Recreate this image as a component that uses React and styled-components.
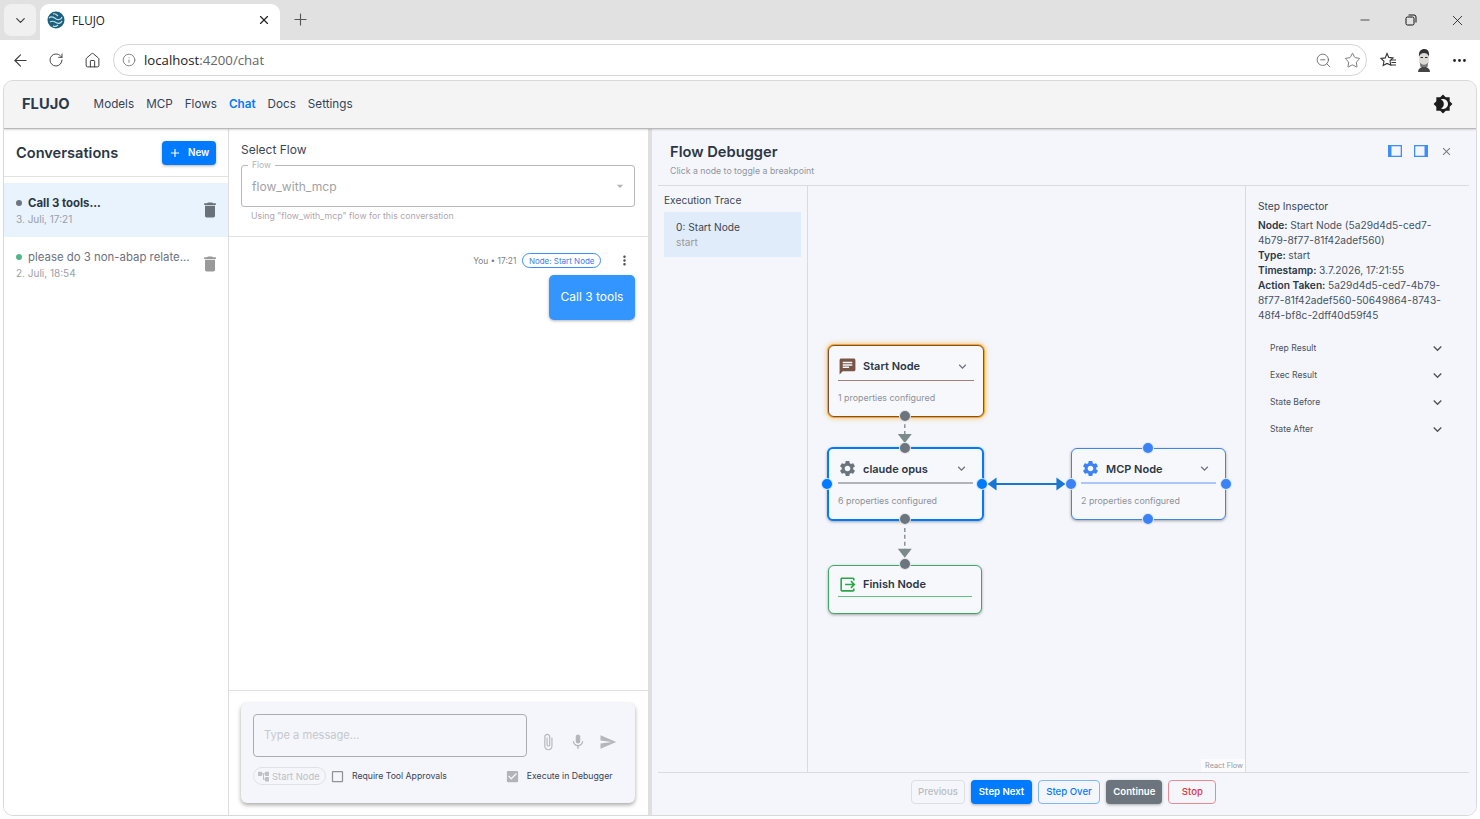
import React from 'react'
import styled, { createGlobalStyle } from 'styled-components'
import { ArrowLeft, RotateCw, Home, Info, ZoomOut, Star, MoreHorizontal, Plus, X, Minus, ChevronDown } from 'lucide-react'
import {
  MdAdd, MdDelete, MdBrightness4, MdAttachFile, MdMic, MdSend, MdAccountTree, MdExpandMore,
  MdClose, MdMoreVert, MdCheckBoxOutlineBlank, MdCheckBox, MdChat, MdSettings, MdOutput, MdArrowDropDown,
} from 'react-icons/md'

const GlobalStyle = createGlobalStyle`
  html, body { margin: 0; padding: 0; height: 100%; overflow: hidden; background: #fff; }
  body { font-family: Inter, "Liberation Sans", sans-serif; color: #2b3645; }
  * { box-sizing: border-box; }
`

const Page = styled.div`
  width: 1480px;
  height: 819px;
  display: flex;
  flex-direction: column;
`

/* browser chrome */
const TabStrip = styled.div`
  height: 40px;
  background: #e1e1e1;
  display: flex;
  align-items: flex-end;
  padding-left: 4px;
`
const TabMenu = styled.div`
  width: 32px;
  height: 32px;
  margin-bottom: 4px;
  border-radius: 7px;
  background: #f0f0f0;
  display: flex;
  align-items: center;
  justify-content: center;
  color: #444;
`
const Tab = styled.div`
  width: 240px;
  height: 36px;
  margin-left: 4px;
  background: #fff;
  border-radius: 9px 9px 0 0;
  display: flex;
  align-items: center;
  padding: 0 9px 4px 7px;
  font-family: "Open Sans", sans-serif;
  font-size: 11.7px;
  color: #222;
`
const TabTitle = styled.span`
  flex: 1;
  margin-left: 7px;
`
const NewTab = styled.div`
  margin: 0 0 7px 11px;
  height: 28px;
  display: flex;
  align-items: center;
  color: #555;
`
const WindowButtons = styled.div`
  margin-left: auto;
  height: 40px;
  display: flex;
  align-items: center;
  color: #111;
`
const WindowButton = styled.div`
  width: 46px;
  display: flex;
  justify-content: center;
`
const RestoreIcon = styled.svg`
  width: 12px;
  height: 12px;
  fill: none;
  stroke: #111;
`
const BrowserBar = styled.div`
  height: 40px;
  background: #fff;
  display: flex;
  align-items: center;
  padding-left: 2px;
  color: #3c3c3c;
`
const BarIcon = styled.div`
  width: 36px;
  display: flex;
  justify-content: center;
`
const Omnibox = styled.div`
  width: 1254px;
  height: 32px;
  margin-left: 3px;
  border: 1px solid #d6d6d6;
  border-radius: 16px;
  display: flex;
  align-items: center;
  padding: 0 5px 0 8px;
  font-family: "Open Sans", sans-serif;
  font-size: 13.2px;
  color: #666;
`
const Host = styled.span`
  color: #222;
`
const UrlText = styled.div`
  flex: 1;
  margin-left: 8px;
`
const OmniIcon = styled.div`
  margin-left: 12px;
  display: flex;
  color: #555;
`
const RightIcons = styled.div`
  display: flex;
  align-items: center;
  margin-left: 12px;
  gap: 18px;
`

/* app */
const AppFrame = styled.div`
  flex: 1;
  margin: 0 3px 3px;
  border: 1px solid #d9d9d9;
  border-radius: 10px;
  overflow: hidden;
  display: flex;
  flex-direction: column;
  min-height: 0;
`
const TopBar = styled.div`
  height: 48px;
  background: #f4f4f4;
  border-bottom: 1px solid #b9b9b9;
  border-radius: 10px 10px 0 0;
  box-shadow: 0 1px 2px rgba(0,0,0,.15);
  display: flex;
  align-items: center;
  padding: 0 23px 1px 18px;
  flex: none;
  position: relative;
  z-index: 2;
`
const Brand = styled.div`
  font-size: 14.7px;
  font-weight: 700;
  color: #2b3a4d;
  margin-right: 24px;
`
const NavLink = styled.div`
  font-size: 11.7px;
  margin-right: 12px;
  font-weight: ${p => p.$active ? 600 : 400};
  color: ${p => p.$active ? '#007bff' : '#33445a'};
`
const ThemeIcon = styled.div`
  margin-left: auto;
  display: flex;
  color: #1c1c1c;
`
const Main = styled.div`
  flex: 1;
  display: flex;
  min-height: 0;
`
const Sidebar = styled.div`
  width: 225px;
  flex: none;
  border-right: 1px solid #dcdcdc;
  background: #fff;
`
const SideHead = styled.div`
  height: 48px;
  display: flex;
  align-items: center;
  justify-content: space-between;
  padding: 0 12px;
  border-bottom: 1px solid #e2e2e2;
`
const SideTitle = styled.div`
  font-size: 14.6px;
  font-weight: 600;
  color: #2b3645;
`
const NewButton = styled.div`
  width: 54px;
  height: 24px;
  background: #007bff;
  border-radius: 4px;
  color: #fff;
  font-size: 9.8px;
  font-weight: 600;
  display: flex;
  align-items: center;
  gap: 6px;
  padding-left: 6px;
  box-shadow: 0 1px 3px rgba(0,0,0,.3);
`
const ConvList = styled.div`
  padding-top: 6px;
`
const ConvItem = styled.div`
  height: 54px;
  background: ${p => p.$active ? '#e8f3fd' : 'transparent'};
  display: flex;
  align-items: center;
  padding: 0 12px;
`
const ConvText = styled.div`
  flex: 1;
  min-width: 0;
`
const ConvTitle = styled.div`
  display: flex;
  align-items: center;
  gap: 6px;
  font-size: 11.4px;
  font-weight: ${p => p.$active ? 700 : 400};
  color: ${p => p.$active ? '#2b3645' : '#6b7280'};
`
const Dot = styled.span`
  width: 6px;
  height: 6px;
  border-radius: 50%;
  background: ${p => p.$color};
`
const ConvDate = styled.div`
  margin-top: 3px;
  font-size: 10px;
  color: #9a9fa6;
`
const Trash = styled.div`
  display: flex;
  color: ${p => p.$active ? '#6b7178' : '#9a9a9a'};
  margin-right: -4px;
`

const Chat = styled.div`
  width: 419px;
  flex: none;
  display: flex;
  flex-direction: column;
  background: #fff;
`
const FlowBox = styled.div`
  height: 108px;
  padding: 13px 13px 0 12px;
  border-bottom: 1px solid #e2e2e2;
`
const FlowLabel = styled.div`
  font-size: 12px;
  color: #3b4654;
`
const FlowSelect = styled.div`
  position: relative;
  height: 42px;
  margin-top: 8px;
  border: 1px solid #b7b7b7;
  border-radius: 3px;
  display: flex;
  align-items: center;
  justify-content: space-between;
  padding: 0 6px 0 10px;
  font-size: 12.1px;
  color: #a2a2a2;
`
const FloatingLabel = styled.span`
  position: absolute;
  left: 6px;
  top: -6px;
  padding: 0 4px;
  background: #fff;
  font-size: 8.5px;
  color: #b5b5b5;
`
const HelperText = styled.div`
  margin: 4px 0 0 10px;
  font-size: 8.75px;
  color: #b0a6ac;
`
const Messages = styled.div`
  flex: 1;
  padding: 16px 13px 0;
  display: flex;
  flex-direction: column;
  align-items: flex-end;
`
const MetaRow = styled.div`
  display: flex;
  align-items: center;
  font-size: 8.4px;
  color: #808080;
`
const NodeChip = styled.span`
  height: 15px;
  margin-left: 6px;
  padding: 0 5.5px;
  border: 1px solid #3d8ef5;
  border-radius: 8px;
  display: flex;
  align-items: center;
  font-size: 8px;
  color: #3d7cf0;
`
const MoreBtn = styled.div`
  display: flex;
  margin-left: 16px;
  margin-right: 3px;
  color: #555;
`
const Bubble = styled.div`
  width: 86px;
  height: 45px;
  margin-top: 7px;
  padding-bottom: 3px;
  background: #3395ff;
  border-radius: 5px;
  color: #fff;
  font-size: 12px;
  display: flex;
  align-items: center;
  justify-content: center;
  box-shadow: 0 1px 3px rgba(0,0,0,.3);
`
const Composer = styled.div`
  height: 125px;
  padding: 12px 13px 0 12px;
  border-top: 1px solid #e2e2e2;
`
const ComposerCard = styled.div`
  height: 100px;
  background: #f4f6fb;
  border-radius: 6px;
  padding: 11px 12px 0;
  box-shadow: 0 2px 4px rgba(0,0,0,.35);
`
const InputRow = styled.div`
  display: flex;
`
const MessageInput = styled.div`
  width: 274px;
  height: 43px;
  border: 1px solid #a9adb3;
  border-radius: 4px;
  padding: 13px 10px;
  font-size: 11.1px;
  color: #c6c8cc;
`
const InputIcons = styled.div`
  display: flex;
  align-items: center;
  margin: 13px 0 0 12px;
  gap: 12px;
  color: #b4b6ba;
`
const OptionRow = styled.div`
  display: flex;
  align-items: center;
  margin-top: 10px;
  font-size: 8.7px;
  color: #384455;
`
const StartChip = styled.div`
  width: 73px;
  height: 18px;
  border: 1px solid #e0e1e5;
  border-radius: 9px;
  display: flex;
  align-items: center;
  padding-left: 3px;
  gap: 2px;
  font-size: 9.4px;
  color: #bcbfc4;
`
const Check = styled.div`
  display: flex;
  margin-left: ${p => p.$gap}px;
  margin-right: 7px;
  color: ${p => p.$on ? '#b1b3b6' : '#8f9296'};
`

const Splitter = styled.div`
  width: 4px;
  flex: none;
  background: #dfdfdf;
`

const Debugger = styled.div`
  flex: 1;
  min-width: 0;
  background: #f4f6fb;
  padding: 0 7px 0 6px;
  display: flex;
  flex-direction: column;
`
const DebugHead = styled.div`
  height: 57px;
  flex: none;
  border-bottom: 1px solid #d9dbdf;
  padding: 14px 0 0 12px;
  display: flex;
  justify-content: space-between;
`
const DebugTitle = styled.div`
  font-size: 14.7px;
  font-weight: 600;
  color: #2b3645;
`
const DebugSub = styled.div`
  margin-top: 5px;
  font-size: 8.75px;
  color: #8f959d;
`
const HeadIcons = styled.div`
  display: flex;
  gap: 12px;
  padding-right: 16px;
  height: 16px;
  align-items: center;
  color: #7a7f86;
`
const DockIcon = styled.svg`
  width: 14px;
  height: 12px;
  fill: none;
  stroke: #3d8ef5;
  stroke-width: 1.3;
`
const DebugBody = styled.div`
  flex: 1;
  display: flex;
  min-height: 0;
`
const Trace = styled.div`
  width: 150px;
  flex: none;
  border-right: 1px solid #d9dbdf;
  padding: 8px 6px 0;
`
const SmallHead = styled.div`
  font-size: 10.2px;
  color: #3b4654;
`
const TraceItem = styled.div`
  height: 45px;
  margin-top: 6px;
  background: #e1ecfa;
  padding: 9px 12px;
  font-size: 10.2px;
  color: #3b4654;
`
const TraceSub = styled.div`
  margin-top: 3px;
  color: #999;
`
const Canvas = styled.div`
  position: relative;
  width: 438px;
  flex: none;
  border-right: 1px solid #d9dbdf;
`
const EdgeLayer = styled.svg`
  position: absolute;
  inset: 0;
  width: 100%;
  height: 100%;
`
const Attribution = styled.div`
  position: absolute;
  right: 0;
  bottom: 0;
  padding: 2px 2px 2px 4px;
  background: rgba(255,255,255,.6);
  font-size: 7.3px;
  color: #999;
`
const NodeBox = styled.div`
  position: absolute;
  left: ${p => p.$x}px;
  top: ${p => p.$y}px;
  width: ${p => p.$w}px;
  height: ${p => p.$h}px;
  border: ${p => p.$bw}px solid ${p => p.$color};
  border-radius: 6px;
  background: #f7f8fc;
  box-shadow: ${p => p.$glow ? '0 0 5px 1px rgba(255,170,30,.75), 0 0 0 1px #f5a623' : '0 1px 3px rgba(0,0,0,.35)'};
  padding: 0 9px;
`
const NodeHead = styled.div`
  height: ${p => p.$h}px;
  padding-top: 6px;
  display: flex;
  align-items: center;
  gap: 6px;
  border-bottom: ${p => p.$lw}px solid ${p => p.$line};
  font-size: 11px;
  font-weight: 600;
  color: #2b3645;
`
const NodeName = styled.span`
  flex: 1;
`
const NodeIcon = styled.div`
  display: flex;
  color: ${p => p.$color};
`
const NodeChevron = styled.div`
  display: flex;
  color: #6b7280;
  margin-right: 4px;
`
const NodeMeta = styled.div`
  margin-top: 11px;
  font-size: 8.9px;
  color: #8d9299;
`
const Handle = styled.span`
  position: absolute;
  left: ${p => p.$x}px;
  top: ${p => p.$y}px;
  width: 12px;
  height: 12px;
  border-radius: 50%;
  background: ${p => p.$color};
  border: 1px solid rgba(255,255,255,.8);
`
const Inspector = styled.div`
  flex: 1;
  padding: 14px 0 0 12px;
  min-width: 0;
`
const InspectorText = styled.div`
  margin-top: 6px;
  font-size: 10.2px;
  line-height: 15px;
  color: #47525f;
  b { font-weight: 600; color: #2b3645; }
`
const Accordion = styled.div`
  margin-top: 11px;
  padding-left: 12px;
`
const AccRow = styled.div`
  height: 27px;
  display: flex;
  align-items: center;
  justify-content: space-between;
  padding-right: 26px;
  font-size: 8.6px;
  color: #47525f;
`
const AccChevron = styled.div`
  display: flex;
  color: #555;
  padding-top: 2px;
  margin-right: -3px;
`
const DebugFoot = styled.div`
  height: 43px;
  flex: none;
  border-top: 1px solid #d9dbdf;
  padding-bottom: 5px;
  display: flex;
  align-items: center;
  justify-content: center;
  gap: 6px;
`
const DebugButton = styled.div`
  height: 24px;
  padding: 0 ${p => p.$pad || 7}px;
  border-radius: 4px;
  display: flex;
  align-items: center;
  font-size: 9.6px;
  font-weight: ${p => p.$raised ? 600 : 500};
  background: ${p => p.$bg || 'transparent'};
  color: ${p => p.$color};
  border: 1px solid ${p => p.$border || 'transparent'};
  box-shadow: ${p => p.$raised ? '0 1px 3px rgba(0,0,0,.3)' : 'none'};
`

const FaviconSvg = () => (
  <svg width="18" height="18" viewBox="0 0 18 18">
    <circle cx="9" cy="9" r="8.5" fill="#1d5f7c" />
    <path d="M2 7c3-3 5 0 7 1s5 1 6-2M3 11c3-2 5 0 7 1s4 0 5-2M6 3c2-1 4 1 5 2M6 15c2 1 4 0 5-1" stroke="#bfe3ea" strokeWidth="1.2" fill="none" />
  </svg>
)

const AvatarSvg = () => (
  <svg width="18" height="24" viewBox="0 0 18 24">
    <path d="M3 24c0-3 2-4 4-5h4c2 1 4 2 4 5z" fill="#444" />
    <ellipse cx="9" cy="10.500" rx="5" ry="7.500" fill="#dedbd7" />
    <path d="M4 8.500C3.500 3 6 1 9.500 1S14.500 4 14 8.500C13 6 11 5 9 5S5 6 4 8.500z" fill="#333" />
    <path d="M4.500 13c1 5 8 5 9 0l-1 6H5.500z" fill="#777" />
    <rect x="5.500" y="9" width="2.500" height="1" fill="#333" />
    <rect x="10" y="9" width="2.500" height="1" fill="#333" />
  </svg>
)

const FavoritesSvg = () => (
  <svg width="18" height="18" viewBox="0 0 18 18" fill="none" stroke="#333" strokeWidth="1.1">
    <path d="M8 2.500l1.800 3.900 4.200.5-3 2.900.8 4.200L8 12.400l-3.800 2.100.8-4.200-3-2.900 4.200-.5z" />
    <path d="M12 9h5M12.500 11.500h4.500M12 14h5" />
  </svg>
)

const GRAY = '#6c757d'
const BLUE = '#007bff'
const MCP_BLUE = '#3b82f6'

const inspectorLines = [
  ['Node:', 'Start Node (5a29d4d5-ced7-'],
  [null, '4b79-8f77-81f42adef560)'],
  ['Type:', 'start'],
  ['Timestamp:', '3.7.2026, 17:21:55'],
  ['Action Taken:', '5a29d4d5-ced7-4b79-'],
  [null, '8f77-81f42adef560-50649864-8743-'],
  [null, '48f4-bf8c-2dff40d59f45'],
]

const FlowNode = ({ x, y, w, h, bw, color, line, lw = 1, headH, icon, iconColor, name, meta, glow, chevron = true }) => (
  <NodeBox $x={x} $y={y} $w={w} $h={h} $bw={bw} $color={color} $glow={glow}>
    <NodeHead $h={headH} $line={line} $lw={lw}>
      <NodeIcon $color={iconColor}>{icon}</NodeIcon>
      <NodeName>{name}</NodeName>
      {chevron && <NodeChevron><MdExpandMore size={15} /></NodeChevron>}
    </NodeHead>
    {meta && <NodeMeta>{meta}</NodeMeta>}
  </NodeBox>
)

export default function App() {
  return (
    <Page>
      <GlobalStyle />
      <TabStrip>
        <TabMenu><ChevronDown size={15} /></TabMenu>
        <Tab>
          <FaviconSvg />
          <TabTitle>FLUJO</TabTitle>
          <X size={14} />
        </Tab>
        <NewTab><Plus size={19} strokeWidth={1.4} /></NewTab>
        <WindowButtons>
          <WindowButton><Minus size={14} strokeWidth={1.2} /></WindowButton>
          <WindowButton>
            <RestoreIcon viewBox="0 0 12 12">
              <rect x="1" y="3" width="8" height="8" rx="1.500" />
              <path d="M3.500 1h5.500a2 2 0 0 1 2 2v5.500" />
            </RestoreIcon>
          </WindowButton>
          <WindowButton><X size={17} strokeWidth={1.1} /></WindowButton>
        </WindowButtons>
      </TabStrip>
      <BrowserBar>
        <BarIcon><ArrowLeft size={19} strokeWidth={1.4} /></BarIcon>
        <BarIcon><RotateCw size={16} strokeWidth={1.4} /></BarIcon>
        <BarIcon><Home size={17} strokeWidth={1.4} /></BarIcon>
        <Omnibox>
          <Info size={14} strokeWidth={1.3} />
          <UrlText><Host>localhost</Host>:4200/chat</UrlText>
          <OmniIcon><ZoomOut size={17} strokeWidth={1.1} /></OmniIcon>
          <OmniIcon><Star size={17} strokeWidth={1.1} /></OmniIcon>
        </Omnibox>
        <RightIcons>
          <FavoritesSvg />
          <AvatarSvg />
          <MoreHorizontal size={17} color="#222" />
        </RightIcons>
      </BrowserBar>

      <AppFrame>
        <TopBar>
          <Brand>FLUJO</Brand>
          <NavLink>Models</NavLink>
          <NavLink>MCP</NavLink>
          <NavLink>Flows</NavLink>
          <NavLink $active>Chat</NavLink>
          <NavLink>Docs</NavLink>
          <NavLink>Settings</NavLink>
          <ThemeIcon><MdBrightness4 size={20} /></ThemeIcon>
        </TopBar>
        <Main>
          <Sidebar>
            <SideHead>
              <SideTitle>Conversations</SideTitle>
              <NewButton><MdAdd size={14} />New</NewButton>
            </SideHead>
            <ConvList>
              <ConvItem $active>
                <ConvText>
                  <ConvTitle $active><Dot $color={GRAY} />Call 3 tools...</ConvTitle>
                  <ConvDate>3. Juli, 17:21</ConvDate>
                </ConvText>
                <Trash $active><MdDelete size={20} /></Trash>
              </ConvItem>
              <ConvItem>
                <ConvText>
                  <ConvTitle><Dot $color="#52b788" />please do 3 non-abap relate...</ConvTitle>
                  <ConvDate>2. Juli, 18:54</ConvDate>
                </ConvText>
                <Trash><MdDelete size={20} /></Trash>
              </ConvItem>
            </ConvList>
          </Sidebar>
          <Chat>
            <FlowBox>
              <FlowLabel>Select Flow</FlowLabel>
              <FlowSelect>
                <FloatingLabel>Flow</FloatingLabel>
                flow_with_mcp
                <MdArrowDropDown size={16} color="#b5b5b5" />
              </FlowSelect>
              <HelperText>Using "flow_with_mcp" flow for this conversation</HelperText>
            </FlowBox>
            <Messages>
              <MetaRow>
                You • 17:21
                <NodeChip>Node: Start Node</NodeChip>
                <MoreBtn><MdMoreVert size={15} /></MoreBtn>
              </MetaRow>
              <Bubble>Call 3 tools</Bubble>
            </Messages>
            <Composer>
              <ComposerCard>
                <InputRow>
                  <MessageInput>Type a message...</MessageInput>
                  <InputIcons>
                    <MdAttachFile size={18} />
                    <MdMic size={18} />
                    <MdSend size={18} />
                  </InputIcons>
                </InputRow>
                <OptionRow>
                  <StartChip><MdAccountTree size={13} />Start Node</StartChip>
                  <Check $gap={4}><MdCheckBoxOutlineBlank size={15} /></Check>
                  Require Tool Approvals
                  <Check $gap={58} $on><MdCheckBox size={15} /></Check>
                  Execute in Debugger
                </OptionRow>
              </ComposerCard>
            </Composer>
          </Chat>
          <Splitter />
          <Debugger>
            <DebugHead>
              <div>
                <DebugTitle>Flow Debugger</DebugTitle>
                <DebugSub>Click a node to toggle a breakpoint</DebugSub>
              </div>
              <HeadIcons>
                <DockIcon viewBox="0 0 14 12">
                  <rect x=".65" y=".65" width="12.700" height="10.700" />
                  <rect x="1" y="1" width="2.500" height="10" fill="#3d8ef5" stroke="none" />
                </DockIcon>
                <DockIcon viewBox="0 0 14 12">
                  <rect x=".65" y=".65" width="12.700" height="10.700" />
                  <rect x="10.500" y="1" width="2.500" height="10" fill="#3d8ef5" stroke="none" />
                </DockIcon>
                <MdClose size={13} />
              </HeadIcons>
            </DebugHead>
            <DebugBody>
              <Trace>
                <SmallHead>Execution Trace</SmallHead>
                <TraceItem>
                  0: Start Node
                  <TraceSub>start</TraceSub>
                </TraceItem>
              </Trace>
              <Canvas>
                <EdgeLayer viewBox="0 0 438 586">
                  <path d="M97 231V250" stroke="#8a9299" strokeWidth="1.500" strokeDasharray="4 3" fill="none" />
                  <path d="M90 248h14l-7 9z" fill="#7b8a8b" />
                  <path d="M97 335V366" stroke="#8a9299" strokeWidth="1.500" strokeDasharray="4 3" fill="none" />
                  <path d="M90 363h14l-7 9z" fill="#7b8a8b" />
                  <path d="M184 298H254" stroke="#1976d2" strokeWidth="2" fill="none" />
                  <path d="M180 298l9-6.500v13zM258 298l-9-6.500v13z" fill="#1976d2" />
                </EdgeLayer>
                <FlowNode x={20} y={159} w={156} h={72} bw={1} color="#7b5044" line="#a08078" headH={35} glow
                  icon={<MdChat size={19} />} iconColor="#795548" name="Start Node" meta="1 properties configured" />
                <FlowNode x={19} y={261} w={157} h={74} bw={2} color={BLUE} line="#b0b3b8" lw={2} headH={35}
                  icon={<MdSettings size={19} />} iconColor={GRAY} name="claude opus" meta="6 properties configured" />
                <FlowNode x={263} y={262} w={155} h={72} bw={1} color="#3f84e8" line="#a9c8f5" lw={2} headH={35}
                  icon={<MdSettings size={19} />} iconColor={MCP_BLUE} name="MCP Node" meta="2 properties configured" />
                <FlowNode x={20} y={379} w={154} h={49} bw={1} color="#3fa866" line="#63bf85" headH={31} chevron={false}
                  icon={<MdOutput size={19} />} iconColor="#28a745" name="Finish Node" />
                <Handle $x={91} $y={224} $color={GRAY} />
                <Handle $x={91} $y={256} $color={GRAY} />
                <Handle $x={13} $y={292} $color={BLUE} />
                <Handle $x={168} $y={292} $color={BLUE} />
                <Handle $x={91} $y={327} $color={GRAY} />
                <Handle $x={91} $y={372} $color={GRAY} />
                <Handle $x={334} $y={256} $color={MCP_BLUE} />
                <Handle $x={257} $y={292} $color={MCP_BLUE} />
                <Handle $x={412} $y={292} $color={MCP_BLUE} />
                <Handle $x={334} $y={327} $color={MCP_BLUE} />
                <Attribution>React Flow</Attribution>
              </Canvas>
              <Inspector>
                <SmallHead>Step Inspector</SmallHead>
                <InspectorText>
                  {inspectorLines.map(([key, value]) => (
                    <div key={value}>{key && <b>{key} </b>}{value}</div>
                  ))}
                </InspectorText>
                <Accordion>
                  {['Prep Result', 'Exec Result', 'State Before', 'State After'].map(label => (
                    <AccRow key={label}>
                      {label}
                      <AccChevron><MdExpandMore size={17} /></AccChevron>
                    </AccRow>
                  ))}
                </Accordion>
              </Inspector>
            </DebugBody>
            <DebugFoot>
              <DebugButton $color="#b8bbc0" $border="#dcdee2" $pad={6.5}>Previous</DebugButton>
              <DebugButton $bg={BLUE} $color="#fff" $raised $pad={6.5}>Step Next</DebugButton>
              <DebugButton $color={BLUE} $border="#7db8fb" $pad={7.5}>Step Over</DebugButton>
              <DebugButton $bg={GRAY} $color="#fff" $raised $pad={6}>Continue</DebugButton>
              <DebugButton $color="#dc3545" $border="#e88a93" $pad={12.5}>Stop</DebugButton>
            </DebugFoot>
          </Debugger>
        </Main>
      </AppFrame>
    </Page>
  )
}
